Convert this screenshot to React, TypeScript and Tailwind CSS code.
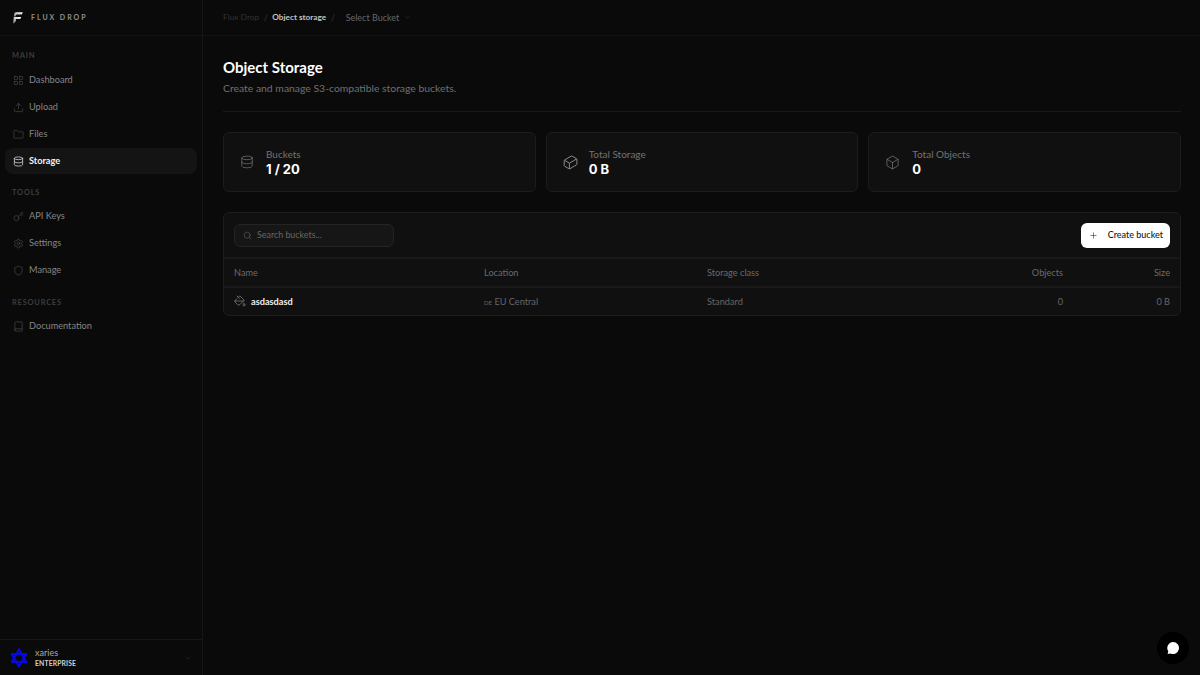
import { Book, Box, ChevronDown, Database, Folder, Key, LayoutGrid, PaintBucket, Plus, Search, Settings, Shield, Upload } from "lucide-react";
import type { ComponentType, ReactNode } from "react";

type IconT = ComponentType<{ size?: number; strokeWidth?: number; className?: string }>;

function WideBox({ strokeWidth = 1, className }: { size?: number; strokeWidth?: number; className?: string }) {
  return (
    <svg width={15} height={15} viewBox="0 0 15 15" fill="none" stroke="currentColor" strokeWidth={strokeWidth} strokeLinejoin="round" className={`-mr-[1px] ${className ?? ""}`}>
      <path d="M1.2 5.8C1.2 5.4 1.4 5.1 1.7 4.9L8 1.2C8.4 1 8.8 1 9.1 1.2L13.4 3.6C13.7 3.8 13.9 4.1 13.9 4.5V9C13.9 9.4 13.7 9.7 13.4 9.9L7 13.7C6.6 13.9 6.2 13.9 5.9 13.7L1.7 11.3C1.4 11.1 1.2 10.8 1.2 10.4Z" />
      <path d="M1.5 5.2L6.4 8.2L13.7 3.9M6.4 8.2V13.8" />
    </svg>
  );
}

function Cube({ strokeWidth = 1, className }: { size?: number; strokeWidth?: number; className?: string }) {
  return <Box size={15} strokeWidth={strokeWidth} className={className} />;
}

function NavItem({ icon: Icon, label, active }: { icon: IconT; label: string; active?: boolean }) {
  return (
    <div className={`flex h-[26px] items-center gap-[5px] rounded-[8px] pl-[8px] text-[9.2px] ${active ? "bg-[#141414] font-bold text-[#f2f2f2]" : "text-[#858585]"}`}>
      <Icon size={11} strokeWidth={active ? 1.5 : 1} className={active ? "text-[#eeeeee]" : "text-[#666666]"} />
      <span>{label}</span>
    </div>
  );
}

function Section({ title, spacing, children }: { title: string; spacing: string; children: ReactNode }) {
  return (
    <div className={`flex flex-col ${spacing}`}>
      <div className="pl-[7px] text-[7.5px] font-bold leading-[12px] tracking-[0.1em] text-[#3d3d3d]">{title}</div>
      <div className="flex flex-col gap-[1px]">{children}</div>
    </div>
  );
}

function Stat({ icon: Icon, label, value }: { icon: IconT; label: string; value: string }) {
  return (
    <div className="flex h-[60px] flex-1 items-center gap-[12px] rounded-[6px] border border-[#1c1c1c] bg-[#101010] pl-[16px]">
      <Icon size={14} strokeWidth={1} className="text-[#8a8a8a]" />
      <div className="flex flex-col">
        <span className="text-[10px] leading-[14px] text-[#737373]">{label}</span>
        <span className="mt-[1px] font-['Inter',sans-serif] text-[13px] font-bold leading-[15px] text-white">{value}</span>
      </div>
    </div>
  );
}

export default function App() {
  return (
    <div className="flex h-[675px] w-[1200px] overflow-hidden bg-[#0a0a0a] font-['Lato','Noto_Sans',sans-serif]">
      <aside className="flex w-[203px] shrink-0 flex-col border-r border-[#161616]">
        <div className="flex h-[36px] shrink-0 items-center gap-[8px] border-b border-[#131313] pl-[13px]">
          <svg width="10" height="12" viewBox="0 0 10 12">
            <defs>
              <linearGradient id="fluxLogo" x1="0.9" y1="0" x2="0.1" y2="1">
                <stop offset="0" stopColor="#ffffff" />
                <stop offset="1" stopColor="#8a8a8a" />
              </linearGradient>
            </defs>
            <path fill="url(#fluxLogo)" d="M3.2 0.3H9.8L8.8 2.6H4C3.3 2.6 2.9 3 2.7 3.7L2.5 4.4H0.9L1.2 2.4C1.4 1.1 2 0.3 3.2 0.3Z" />
            <path fill="url(#fluxLogo)" d="M0.8 5H8.2L7.3 7.1H3L2.6 9.6L0.2 11.7Z" />
          </svg>
          <span className="text-[7px] font-bold tracking-[0.28em] text-[#8f8f8f]">FLUX DROP</span>
        </div>
        <nav className="flex flex-1 flex-col px-[5px] pt-[14px]">
          <Section title="MAIN" spacing="gap-[5px]">
            <NavItem icon={LayoutGrid} label="Dashboard" />
            <NavItem icon={Upload} label="Upload" />
            <NavItem icon={Folder} label="Files" />
            <NavItem icon={Database} label="Storage" active />
          </Section>
          <Section title="TOOLS" spacing="mt-[13px] gap-[4px]">
            <NavItem icon={Key} label="API Keys" />
            <NavItem icon={Settings} label="Settings" />
            <NavItem icon={Shield} label="Manage" />
          </Section>
          <Section title="RESOURCES" spacing="mt-[14px] gap-[4px]">
            <NavItem icon={Book} label="Documentation" />
          </Section>
        </nav>
        <div className="flex h-[36px] shrink-0 items-center border-t border-[#161616] pl-[10px] pr-[10px]">
          <svg width="18" height="20" viewBox="0 0 18 20" fill="none" stroke="#0808e0" strokeWidth="2.2" strokeLinejoin="round">
            <path d="M9 1.5L16.2 14H1.8Z" />
            <path d="M9 18.5L1.8 6H16.2Z" />
          </svg>
          <div className="ml-[7px] flex flex-1 flex-col">
            <span className="text-[9px] leading-[11px] text-[#a8a8a8]">xaries</span>
            <span className="text-[6.8px] font-bold leading-[10px] tracking-[0.02em] text-[#d0d0d0]">ENTERPRISE</span>
          </div>
          <ChevronDown size={8} strokeWidth={1.2} className="text-[#444444]" />
        </div>
      </aside>
      <main className="flex min-w-0 flex-1 flex-col">
        <header className="flex h-[36px] shrink-0 items-center border-b border-[#131313] pl-[20px] text-[9px]">
          <span className="text-[8.4px] text-[#333333]">Flux Drop</span>
          <span className="mx-[4.5px] text-[#333333]">/</span>
          <span className="text-[8.2px] font-bold text-[#c4c4c4]">Object storage</span>
          <span className="ml-[5px] text-[#333333]">/</span>
          <span className="ml-[10.5px] text-[#666666]">Select Bucket</span>
          <ChevronDown size={7} strokeWidth={1.2} className="ml-[5px] text-[#555555]" />
        </header>
        <div className="flex flex-col pl-[20px] pr-[19px] pt-[21px]">
          <h1 className="text-[15px] font-bold leading-[20px] text-white">Object Storage</h1>
          <p className="mt-[3px] text-[10.4px] leading-[16px] text-[#707070]">Create and manage S3-compatible storage buckets.</p>
          <div className="mt-[15px] h-px bg-[#1a1a1a]" />
          <div className="mt-[20px] flex gap-[10px]">
            <Stat icon={Database} label="Buckets" value="1 / 20" />
            <Stat icon={WideBox} label="Total Storage" value="0 B" />
            <Stat icon={Cube} label="Total Objects" value="0" />
          </div>
          <section className="mt-[20px] rounded-[6px] border border-[#1c1c1c] bg-[#101010]">
            <div className="flex h-[46px] items-center justify-between border-b-2 border-[#191919] pl-[10px] pr-[10px]">
              <div className="flex h-[23px] w-[160px] items-center gap-[6px] rounded-[6px] border border-[#242424] bg-[#161616] pl-[8px]">
                <Search size={9} strokeWidth={1.2} className="text-[#777777]" />
                <span className="-ml-[1px] text-[8.9px] text-[#666666]">Search buckets...</span>
              </div>
              <div className="flex h-[25px] items-center gap-[10px] rounded-[6px] bg-white pl-[8px] pr-[7px] text-[9px] font-medium text-[#161616]">
                <Plus size={9} strokeWidth={1.4} />
                <span>Create bucket</span>
              </div>
            </div>
            <div className="grid h-[29px] grid-cols-[250px_223px_1fr_120px_107px] items-center border-b-2 border-[#191919] px-[10px] text-[9.2px] text-[#6b6b6b]">
              <span>Name</span>
              <span>Location</span>
              <span>Storage class</span>
              <span className="text-right">Objects</span>
              <span className="text-right">Size</span>
            </div>
            <div className="grid h-[27px] grid-cols-[250px_223px_1fr_120px_107px] items-center px-[10px] text-[9.2px] text-[#666666]">
              <span className="flex items-center gap-[5px]">
                <PaintBucket size={12} strokeWidth={1.1} className="text-[#a8a8a8]" />
                <span className="font-bold text-[#eeeeee]">asdasdasd</span>
              </span>
              <span><span className="text-[6px]">DE</span> EU Central</span>
              <span>Standard</span>
              <span className="text-right">0</span>
              <span className="text-right">0 B</span>
            </div>
          </section>
        </div>
      </main>
      <div className="absolute left-[1157px] top-[632px] flex h-[32px] w-[32px] items-center justify-center rounded-full bg-black">
        <svg width="14" height="14" viewBox="0 0 14 14" fill="white">
          <path d="M7 1a6 6 0 1 1-2.6 11.4L1.6 13l.7-2.7A6 6 0 0 1 7 1Z" />
        </svg>
      </div>
    </div>
  );
}
